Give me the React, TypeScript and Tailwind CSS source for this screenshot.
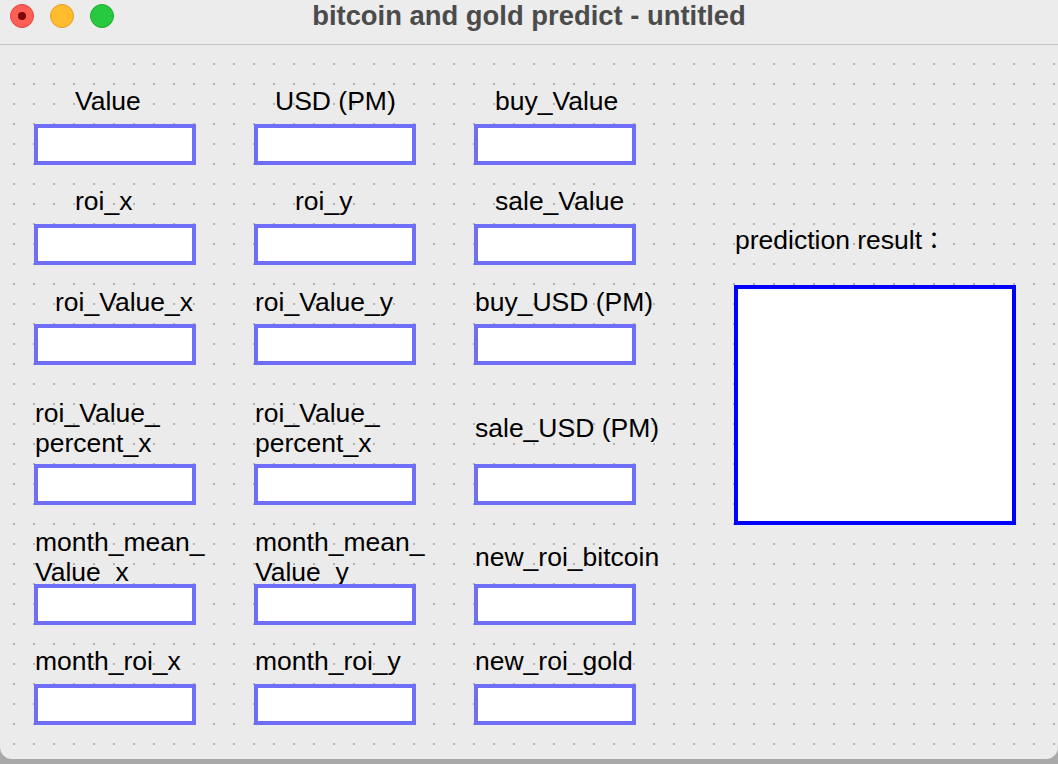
import React from "react";

const FONT = "font-['Liberation_Sans','Noto_Sans_CJK_TC',sans-serif]";

type Cell = { label: string[]; pl: string };

function Input() {
  return <div className="h-[41px] w-[162px] border-[4px] border-[#6e6ef6] bg-white" />;
}

function LabelText({ lines, pl }: { lines: string[]; pl: string }) {
  return (
    <div className={`${pl} text-[26.5px] leading-[30px] text-black whitespace-nowrap`}>
      {lines.map((l, i) => (
        <div key={i}>{l}</div>
      ))}
    </div>
  );
}

function Row({
  cells,
  pt,
  labelH,
  mt,
}: {
  cells: Cell[];
  pt: string;
  labelH: string;
  mt: string;
}) {
  return (
    <div className={`grid grid-cols-[162px_162px_162px] gap-x-[58px] ${pt}`}>
      {cells.map((c, i) => (
        <div key={i} className="flex flex-col">
          <div className={`${labelH} flex items-center`}>
            <LabelText lines={c.label} pl={c.pl} />
          </div>
          <div className={mt}>
            <Input />
          </div>
        </div>
      ))}
    </div>
  );
}

export default function App() {
  return (
    <div className={`w-[1058px] h-[764px] bg-[#a9a9a9] overflow-hidden ${FONT}`}>
      <div className="w-[1058px] h-[759px] rounded-b-[12px] overflow-hidden bg-[#ebebeb] flex flex-col">
        {/* Title bar */}
        <div className="relative h-[45px] shrink-0 bg-[#ececec] border-b border-[#c6c6c6] flex items-start">
          <div className="flex gap-[16px] pl-[10px] pt-[4px]">
            <div className="w-[24px] h-[24px] rounded-full bg-[#fe5f57] border border-[#e2463f] flex items-center justify-center">
              <div className="w-[8px] h-[8px] rounded-full bg-[#7e0508]" />
            </div>
            <div className="w-[24px] h-[24px] rounded-full bg-[#febc2e] border border-[#dfa023]" />
            <div className="w-[24px] h-[24px] rounded-full bg-[#28c840] border border-[#1dad2b]" />
          </div>
          <div className="absolute left-0 right-0 top-[0px] text-center text-[27.4px] leading-[31px] font-bold text-[#4b4b4b]">
            bitcoin and gold predict - untitled
          </div>
        </div>

        {/* Content */}
        <div className="flex-1 flex bg-[radial-gradient(circle,#b3b3b3_1px,transparent_1.5px)] bg-size-[20px_20px] bg-position-[4px_9px]">
          <div className="pl-[34px] w-[636px] shrink-0 flex flex-col">
            <Row
              pt="pt-[41px]"
              labelH="h-[30px]"
              mt="mt-[8px]"
              cells={[
                { label: ["Value"], pl: "pl-[41px]" },
                { label: ["USD (PM)"], pl: "pl-[21px]" },
                { label: ["buy_Value"], pl: "pl-[21px]" },
              ]}
            />
            <Row
              pt="pt-[21px]"
              labelH="h-[30px]"
              mt="mt-[8px]"
              cells={[
                { label: ["roi_x"], pl: "pl-[41px]" },
                { label: ["roi_y"], pl: "pl-[41px]" },
                { label: ["sale_Value"], pl: "pl-[21px]" },
              ]}
            />
            <Row
              pt="pt-[22px]"
              labelH="h-[30px]"
              mt="mt-[7px]"
              cells={[
                { label: ["roi_Value_x"], pl: "pl-[21px]" },
                { label: ["roi_Value_y"], pl: "pl-[1px]" },
                { label: ["buy_USD (PM)"], pl: "pl-[1px]" },
              ]}
            />
            <Row
              pt="pt-[33px]"
              labelH="h-[60px]"
              mt="mt-[6px]"
              cells={[
                { label: ["roi_Value_", "percent_x"], pl: "pl-[1px]" },
                { label: ["roi_Value_", "percent_x"], pl: "pl-[1px]" },
                { label: ["sale_USD (PM)"], pl: "pl-[1px]" },
              ]}
            />
            <Row
              pt="pt-[23px]"
              labelH="h-[58px]"
              mt="mt-[-2px]"
              cells={[
                { label: ["month_mean_", "Value_x"], pl: "pl-[1px]" },
                { label: ["month_mean_", "Value_y"], pl: "pl-[1px]" },
                { label: ["new_roi_bitcoin"], pl: "pl-[1px]" },
              ]}
            />
            <Row
              pt="pt-[21px]"
              labelH="h-[30px]"
              mt="mt-[8px]"
              cells={[
                { label: ["month_roi_x"], pl: "pl-[1px]" },
                { label: ["month_roi_y"], pl: "pl-[1px]" },
                { label: ["new_roi_gold"], pl: "pl-[1px]" },
              ]}
            />
          </div>

          <div className="pl-[98px] pt-[180px] flex flex-col">
            <div className="h-[30px] pl-[1px] text-[26.5px] leading-[30px] text-black whitespace-nowrap">
              prediction result<span className="font-['Noto_Sans_CJK_TC',sans-serif] text-[24px] leading-none">：</span>
            </div>
            <div className="mt-[30px] w-[282px] h-[240px] border-[4px] border-[#0000ff] bg-white" />
          </div>
        </div>
      </div>
    </div>
  );
}
